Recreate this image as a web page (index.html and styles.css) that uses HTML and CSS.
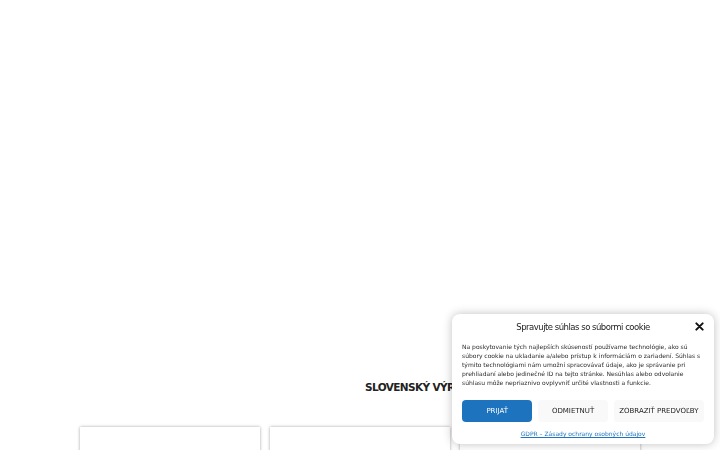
FILE: index.html
```html
<!DOCTYPE html>
<html lang="sk">
<head>
<meta charset="utf-8">
<title>Slovenský výrobca</title>
<link rel="stylesheet" href="styles.css">
</head>
<body>
<main class="page">
  <section class="hero"></section>
  <section class="products">
    <h2 class="section-title">SLOVENSKÝ VÝROBCA</h2>
    <div class="cards">
      <div class="card"></div>
      <div class="card"></div>
      <div class="card"></div>
    </div>
  </section>
</main>

<div class="cookie" role="dialog">
  <div class="cookie-head">
    <span class="cookie-title">Spravujte súhlas so súbormi cookie</span>
    <span class="cookie-close">
      <svg viewBox="0 0 10 10" width="9" height="9"><path d="M1.5 1.5 L8.5 8.5 M8.5 1.5 L1.5 8.5" stroke="#111" stroke-width="2.2" stroke-linecap="round"/></svg>
    </span>
  </div>
  <p class="cookie-text">Na poskytovanie tých najlepších skúseností používame technológie, ako sú súbory cookie na ukladanie a/alebo prístup k informáciám o zariadení. Súhlas s týmito technológiami nám umožní spracovávať údaje, ako je správanie pri prehliadaní alebo jedinečné ID na tejto stránke. Nesúhlas alebo odvolanie súhlasu môže nepriaznivo ovplyvniť určité vlastnosti a funkcie.</p>
  <div class="cookie-buttons">
    <button class="btn btn-accept">PRIJAŤ</button>
    <button class="btn btn-deny">ODMIETNUŤ</button>
    <button class="btn btn-prefs">ZOBRAZIŤ PREDVOĽBY</button>
  </div>
  <a class="cookie-link" href="#">GDPR – Zásady ochrany osobných údajov</a>
</div>
</body>
</html>
```
FILE: styles.css
```css
html, body {
  margin: 0;
  padding: 0;
  background: #fff;
  font-family: "DejaVu Sans", "Noto Sans", sans-serif;
  color: #222;
}
.page {
  width: 720px;
  height: 450px;
  overflow: hidden;
}
.hero {
  height: 380px;
}
.products {
  width: 560px;
  margin: 0 auto;
}
.section-title {
  margin: 0;
  padding-left: 285px;
  font-size: 10.5px;
  letter-spacing: -0.6px;
  font-weight: bold;
  line-height: 14px;
  color: #222;
  white-space: nowrap;
}
.cards {
  margin-top: 33px;
  display: grid;
  grid-template-columns: repeat(3, 180px);
  gap: 10px;
}
.card {
  height: 120px;
  background: #fff;
  box-shadow: 0 0 3px rgba(0,0,0,0.35);
}
.cookie {
  position: fixed;
  left: 452px;
  top: 314px;
  width: 262px;
  height: 130px;
  box-sizing: border-box;
  padding: 7px 10px 0 10px;
  background: #fff;
  border-radius: 8px;
  box-shadow: 0 0 10px rgba(0,0,0,0.25);
}
.cookie-head {
  display: flex;
  align-items: center;
  justify-content: center;
  position: relative;
  height: 12px;
}
.cookie-title {
  font-size: 8.5px;
  letter-spacing: -0.5px;
  font-weight: 500;
  color: #222;
}
.cookie-close {
  position: absolute;
  right: 0;
  top: 1px;
  display: flex;
}
.cookie-text {
  margin: 9px 0 0 0;
  font-size: 6px;
  line-height: 9px;
  color: #2a2a2a;
}
.cookie-buttons {
  display: flex;
  gap: 6px;
  margin-top: 13px;
}
.btn {
  height: 22px;
  border: none;
  border-radius: 4px;
  font-family: inherit;
  font-size: 7px;
  font-weight: 500;
  padding: 0;
  cursor: pointer;
}
.btn-accept {
  width: 71px;
  background: #1e73be;
  color: #fff;
}
.btn-deny {
  width: 70px;
  background: #f9f9f9;
  color: #222;
}
.btn-prefs {
  width: 91px;
  background: #f9f9f9;
  color: #222;
}
.cookie-link {
  display: block;
  margin-top: 8px;
  text-align: center;
  font-size: 6px;
  color: #1e73be;
  text-decoration: underline;
}
```
